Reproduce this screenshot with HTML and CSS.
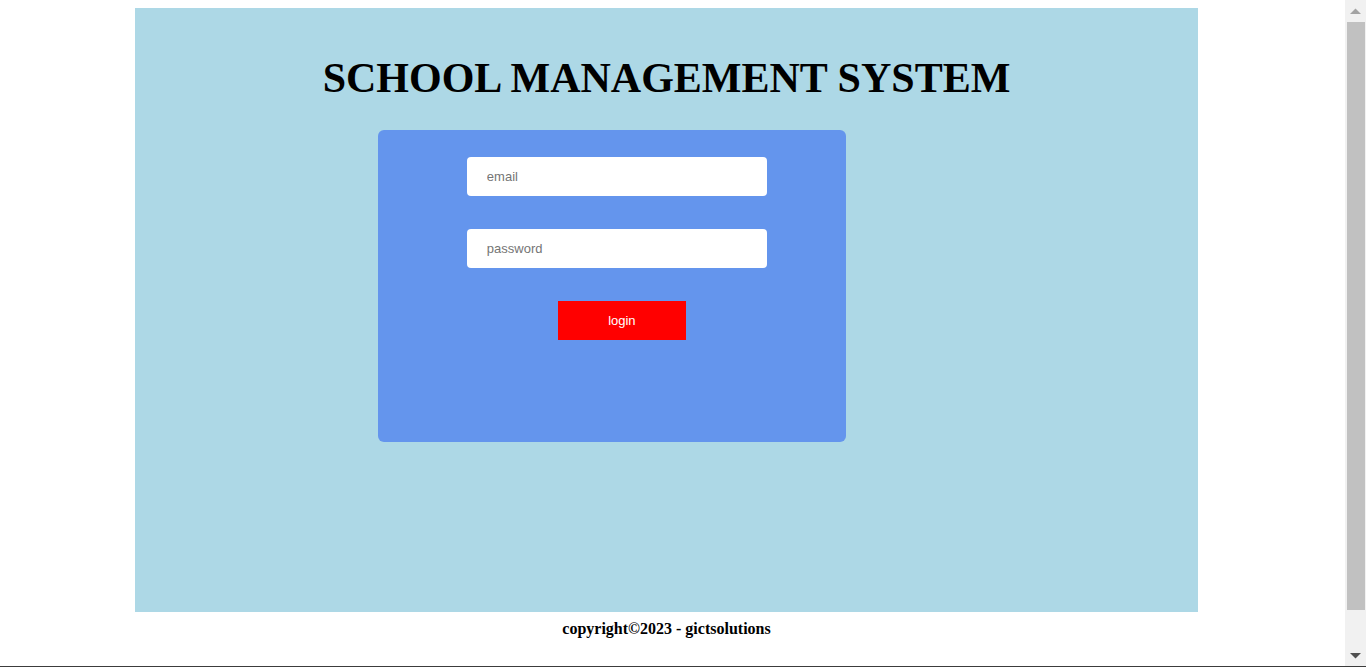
FILE: index.html
```html
<!DOCTYPE html>
<html lang="en">
<head>
<meta charset="utf-8">
<title>School Management System</title>
<link rel="stylesheet" href="styles.css">
</head>
<body>
<div class="window">
  <div class="page">
    <main class="container">
      <h1 class="title">SCHOOL MANAGEMENT SYSTEM</h1>
      <form class="login-card">
        <input class="field" type="email" placeholder="email" aria-label="email">
        <input class="field" type="password" placeholder="password" aria-label="password">
        <button class="login-button" type="button">login</button>
      </form>
    </main>
    <footer class="footer">copyright©2023 - gictsolutions</footer>
  </div>
  <div class="scrollbar" aria-hidden="true">
    <svg class="arrow" viewBox="0 0 21 22"><path d="M5 14 L10.5 8.5 L16 14 Z" fill="#a3a3a3"/></svg>
    <div class="track"><div class="thumb"></div></div>
    <svg class="arrow" viewBox="0 0 21 22"><path d="M5 9 L10.5 14.5 L16 9 Z" fill="#505050"/></svg>
  </div>
</div>
</body>
</html>
```
FILE: styles.css
```css
* {
  box-sizing: border-box;
}

body {
  margin: 0;
  background: #fff;
  color: #000;
  font-family: "Liberation Serif", "Times New Roman", serif;
}

.window {
  display: flex;
  min-height: 100vh;
  border-bottom: 1px solid #3c3c3c;
}

.page {
  flex: 1;
  min-width: 0;
  padding: 8px 147px 0 135px;
}

.container {
  padding: 46px 0 170px;
  background: lightblue;
}

.title {
  margin: 0 0 28px;
  font-size: 42px;
  line-height: 48px;
  font-weight: bold;
  text-align: center;
}

.login-card {
  display: flex;
  flex-direction: column;
  align-items: center;
  gap: 33px;
  width: 44%;
  margin-left: 243px;
  padding: 27px 0 102px 20px;
  border-radius: 6px;
  background: cornflowerblue;
}

.field {
  width: 300px;
  height: 39px;
  margin: 0 10px 0 0;
  padding: 0 20px;
  border: 0;
  border-radius: 4px;
  background: #fff;
  font: 13px/15px "Liberation Sans", Arial, sans-serif;
}

.field::placeholder {
  color: #757575;
}

.login-button {
  width: 128px;
  height: 39px;
  padding: 0;
  border: 0;
  background: red;
  color: #fff;
  font: 13px/15px "Liberation Sans", Arial, sans-serif;
}

.footer {
  padding: 8px 0;
  font-size: 16px;
  line-height: 18px;
  font-weight: bold;
  text-align: center;
}

.scrollbar {
  display: flex;
  flex-direction: column;
  width: 21px;
  background: #f1f1f1;
}

.arrow {
  width: 21px;
  height: 22px;
}

.track {
  flex: 1;
  padding: 0 1px 0 2px;
}

.thumb {
  height: 94.5%;
  background: #c1c1c1;
}
```
